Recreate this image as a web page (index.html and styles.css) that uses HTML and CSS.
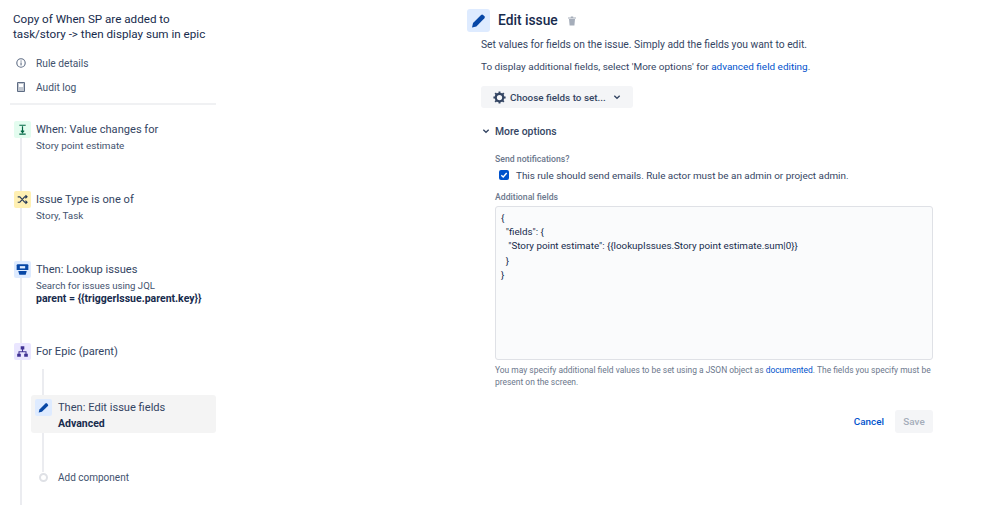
FILE: index.html
```html
<!DOCTYPE html>
<html lang="en">
<head>
<meta charset="utf-8">
<title>Edit issue</title>
<link rel="stylesheet" href="styles.css">
</head>
<body>
<div class="page">
  <aside class="side">
    <h1 class="rule-title">Copy of When SP are added to task/story -&gt; then display sum in epic</h1>
    <nav class="side-nav">
      <div class="nav-item"><svg class="nav-icon" viewBox="0 0 12 12"><circle cx="6" cy="6" r="4.2" fill="none" stroke="#5e6c84" stroke-width="1.1"/><rect x="5.5" y="5.4" width="1.1" height="3" fill="#5e6c84"/><rect x="5.5" y="3.5" width="1.1" height="1.1" fill="#5e6c84"/></svg><span>Rule details</span></div>
      <div class="nav-item"><svg class="nav-icon" viewBox="0 0 12 12"><path d="M2.5 1.5h7v9h-7z" fill="#c1c7d0" stroke="#5e6c84" stroke-width="1"/><path d="M4 3h4v3H4z" fill="#fff"/></svg><span>Audit log</span></div>
    </nav>
    <div class="timeline">
      <span class="line"></span>
      <div class="step s1">
        <span class="badge green"><svg viewBox="0 0 16 16"><path d="M5 4h6M8 5v6M5 12.300h6M6.500 9 8 10.800 9.500 9" fill="none" stroke="#006644" stroke-width="1.100"/></svg></span>
        <div class="step-text"><div class="step-name">When: Value changes for</div><div class="step-sub">Story point estimate</div></div>
      </div>
      <div class="step s2">
        <span class="badge yellow"><svg viewBox="0 0 16 16"><path d="M3.500 5.500h2l4.500 5h2M3.500 10.500h2l4.500-5h2M10.800 4 12.300 5.500 10.800 7M10.800 9 12.300 10.500 10.800 12" fill="none" stroke="#253858" stroke-width="1"/></svg></span>
        <div class="step-text"><div class="step-name">Issue Type is one of</div><div class="step-sub">Story, Task</div></div>
      </div>
      <div class="step s3">
        <span class="badge blue"><svg viewBox="0 0 16 16"><path d="M3.500 3h9a1 1 0 0 1 1 1v4.500h-11V4a1 1 0 0 1 1-1z" fill="#0747a6"/><path d="M5.500 4.800h5v2.200h-5z" fill="#deebff"/><path d="M4 9.500h8L11 13H5z" fill="#0747a6"/></svg></span>
        <div class="step-text"><div class="step-name">Then: Lookup issues</div><div class="step-sub search">Search for issues using JQL</div><div class="step-code">parent = {{triggerIssue.parent.key}}</div></div>
      </div>
      <div class="step s4">
        <span class="badge purple"><svg viewBox="0 0 16 16"><path d="M6.300 3h3.400v3H6.300zM3 10h3.400v3H3zM9.600 10H13v3H9.600z" fill="#403294"/><path d="M8 5.500V8.300M4.700 10.500V8.300h6.600v2.200" fill="none" stroke="#403294" stroke-width="1"/></svg></span>
        <div class="step-text"><div class="step-name">For Epic (parent)</div></div>
      </div>
      <div class="branch">
        <span class="branch-line"></span>
        <div class="step selected">
          <span class="badge blue"><svg viewBox="0 0 16 16"><path d="M3.500 12.800l.7-3L9.800 4.200a1 1 0 0 1 1.400 0l.9.900a1 1 0 0 1 0 1.400L6.500 12.100z" fill="#0747a6"/></svg></span>
          <div class="step-text"><div class="step-name">Then: Edit issue fields</div><div class="step-code">Advanced</div></div>
        </div>
        <div class="add"><span class="add-dot"></span><span>Add component</span></div>
      </div>
    </div>
  </aside>

  <main class="main">
    <header class="head">
      <span class="head-badge"><svg viewBox="0 0 16 16"><path d="M3.500 12.800l.7-3L9.800 4.200a1 1 0 0 1 1.400 0l.9.900a1 1 0 0 1 0 1.400L6.500 12.100z" fill="#0747a6"/></svg></span>
      <h2 class="head-title">Edit issue</h2>
      <svg class="trash" viewBox="0 0 10 10"><path d="M1 1.500h8v1H1zM3.800.500h2.400v1H3.800zM2 3h6l-.6 6.500H2.600z" fill="#a5adba"/></svg>
    </header>
    <div class="body">
      <p class="para p1">Set values for fields on the issue. Simply add the fields you want to edit.</p>
      <p class="para p2">To display additional fields, select 'More options' for <a class="link">advanced field editing</a>.</p>
      <div class="choose"><svg class="gear" viewBox="0 0 16 16"><circle cx="8" cy="8" r="4" fill="none" stroke="#344563" stroke-width="2.400"/><path d="M8 1.500v2.500M8 12v2.500M1.500 8H4M12 8h2.500M3.400 3.400l1.800 1.800M10.800 10.800l1.800 1.800M3.400 12.600l1.800-1.800M10.800 5.200l1.800-1.800" stroke="#344563" stroke-width="2"/></svg><span>Choose fields to set...</span><svg class="chev" viewBox="0 0 8 8"><path d="M1.300 2.700 4 5.300l2.700-2.600" fill="none" stroke="#344563" stroke-width="1.300"/></svg></div>
      <div class="more"><svg class="chev" viewBox="0 0 8 8"><path d="M1.300 2.700 4 5.300l2.700-2.600" fill="none" stroke="#344563" stroke-width="1.300"/></svg><span>More options</span></div>
      <div class="options">
        <div class="label">Send notifications?</div>
        <div class="check-row"><span class="check"><svg viewBox="0 0 10 10"><path d="M2.300 5.200 4.200 7l3.500-4" fill="none" stroke="#fff" stroke-width="1.400"/></svg></span><span>This rule should send emails. Rule actor must be an admin or project admin.</span></div>
        <div class="label label2">Additional fields</div>
        <div class="code">{
  "fields": {
   "Story point estimate": {{lookupIssues.Story point estimate.sum|0}}
  }
}</div>
        <p class="help">You may specify additional field values to be set using a JSON object as <a class="link">documented</a>. The fields you specify must be present on the screen.</p>
        <div class="actions"><span class="cancel">Cancel</span><span class="save">Save</span></div>
      </div>
    </div>
  </main>
</div>
</body>
</html>
```

FILE: styles.css
```css
* { box-sizing: border-box; }
html, body { margin: 0; height: 100%; background: #fff; overflow: hidden; }
body { font-family: "Roboto", "Open Sans", sans-serif; font-size: 10.4px; color: #172b4d; }
h1, h2, p { margin: 0; font-weight: 400; }
.page { display: flex; width: 999px; height: 505px; }

.side { width: 216px; flex: none; display: flex; flex-direction: column; }
.rule-title { margin: 12px 0 0 13px; width: 200px; font-size: 11.65px; line-height: 15px; font-weight: 400; color: #172b4d; }
.side-nav { margin: 9px 0 0 10px; padding-bottom: 4px; border-bottom: 2px solid #f0f1f3; }
.nav-item { display: flex; align-items: center; height: 24px; color: #42526e; font-size: 10.2px; }
.nav-icon { width: 12px; height: 12px; margin: 0 9px 0 5px; flex: none; }

.timeline { position: relative; flex: 1; }
.line { position: absolute; left: 20px; top: 30px; bottom: 0; width: 2px; background: #ebecf0; }
.step { position: relative; display: flex; gap: 5px; margin-left: 14px; }
.s1 { margin-top: 16px; }
.s2 { margin-top: 37px; }
.s3 { margin-top: 37px; }
.s4 { margin-top: 39px; }
.badge { width: 17px; height: 17px; border-radius: 2px; flex: none; display: block; }
.badge svg { display: block; width: 17px; height: 17px; }
.green { background: #e3fcef; }
.yellow { background: #fff0b3; }
.blue { background: #deebff; }
.purple { background: #eae6ff; }
.step-text { padding-top: 1px; }
.step-name { font-size: 11.1px; line-height: 15px; color: #344563; white-space: nowrap; }
.step-sub { font-size: 9.9px; line-height: 16px; margin-top: 1px; color: #42526e; white-space: nowrap; }
.search { font-size: 9.6px; }
.step-code { font-size: 10.5px; line-height: 11px; margin-top: -1px; font-weight: 700; color: #172b4d; white-space: nowrap; }
.selected { gap: 6px; }
.selected .step-code { line-height: 16px; margin-top: 1px; }

.branch { position: relative; margin: 0 0 0 31px; padding-top: 35px; }
.branch-line { position: absolute; left: 11px; top: 9px; height: 103px; width: 2px; background: #ebecf0; }
.selected { margin: 0; padding: 4px; height: 38px; border-radius: 3px; background: #f4f4f4; }
.add { position: relative; display: flex; align-items: center; gap: 10px; margin: 36px 0 0 8px; height: 16px; font-size: 10px; color: #42526e; }
.add-dot { width: 9px; height: 9px; border-radius: 50%; border: 2px solid #dfe1e6; background: #fff; flex: none; }

.main { margin-left: 251px; width: 480px; flex: none; }
.head { display: flex; align-items: center; margin-top: 9px; }
.head-badge { width: 23px; height: 23px; border-radius: 3px; background: #deebff; flex: none; }
.head-badge svg { display: block; width: 23px; height: 23px; }
.head-title { margin-left: 8px; font-size: 13.8px; line-height: 23px; font-weight: 500; color: #172b4d; }
.trash { width: 10px; height: 10px; margin-left: 9px; }
.body { margin-left: 14px; width: 452px; }
.para { font-size: 10.3px; line-height: 14px; color: #344563; white-space: nowrap; }
.p1 { margin-top: 6px; }
.p2 { margin-top: 8px; font-size: 9.95px; }
.link { color: #0052cc; }
.choose { display: flex; align-items: center; width: 152px; height: 22px; margin-top: 12px; padding-left: 11px; border-radius: 3px; background: #f4f5f7; font-size: 9.9px; font-weight: 500; color: #344563; }
.gear { width: 15px; height: 15px; flex: none; margin-right: 3px; }
.chev { width: 8px; height: 8px; flex: none; }
.choose .chev { margin-left: 7px; }
.more { display: flex; align-items: center; gap: 5px; margin: 16px 0 0 1px; height: 14px; font-size: 10.4px; font-weight: 500; color: #344563; }
.options { margin-left: 14px; width: 438px; }
.label { margin-top: 15px; font-size: 8.7px; line-height: 12px; font-weight: 500; color: #6b778c; }
.label2 { margin-top: 10px; }
.check-row { display: flex; align-items: center; gap: 7px; margin: 4px 0 0 4px; height: 12px; font-size: 9.9px; color: #344563; white-space: nowrap; }
.check { width: 10px; height: 10px; border-radius: 2px; background: #0052cc; flex: none; }
.check svg { display: block; width: 10px; height: 10px; }
.code { height: 154px; margin-top: 3px; padding: 4px 5px; border: 1px solid #dfe1e6; border-radius: 3px; background: #fafbfc; font-size: 9.8px; line-height: 14.2px; white-space: pre; color: #172b4d; }
.help { margin: 4px -3px 0 0; font-size: 8.45px; line-height: 12px; color: #6b778c; }
.actions { display: flex; align-items: center; justify-content: flex-end; gap: 11px; margin-top: 22px; font-size: 9.9px; font-weight: 500; }
.cancel { color: #0052cc; }
.save { display: flex; align-items: center; justify-content: center; width: 38px; height: 23px; border-radius: 3px; background: #f4f5f7; color: #a5adba; }
```
